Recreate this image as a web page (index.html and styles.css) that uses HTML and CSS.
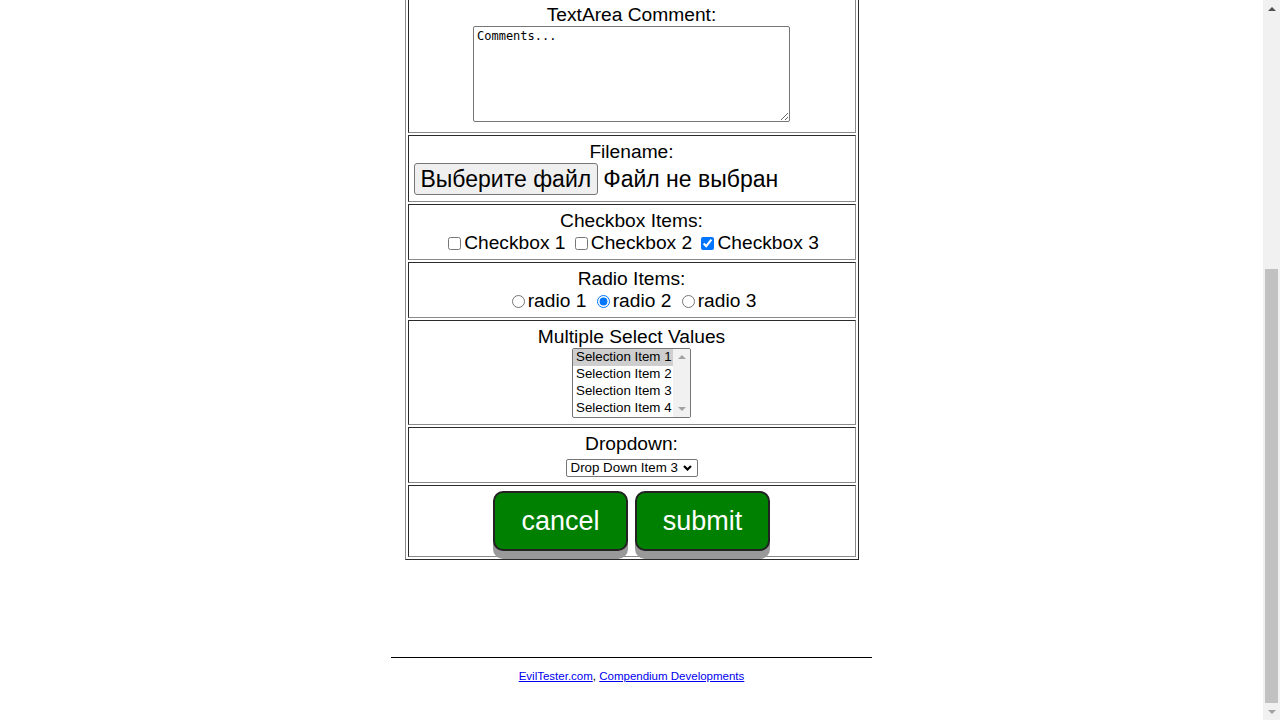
FILE: index.html
```html
<!DOCTYPE html>
<html lang="ru">
<head>
<meta charset="utf-8">
<title>HTML Form Elements</title>
<link rel="stylesheet" href="styles.css">
</head>
<body>
<div class="viewport">
  <div class="page">
    <form class="form" action="#" method="post">
      <table class="form-table">
        <tr><td class="cell-first">
          <div class="label">TextArea Comment:</div>
          <div class="ctl ctl-area"><textarea class="comments" name="comments">Comments...</textarea></div>
        </td></tr>
        <tr><td>
          <div class="label">Filename:</div>
          <div class="ctl ctl-file"><button type="button" class="file-btn">Выберите файл</button><span class="file-name">Файл не выбран</span></div>
        </td></tr>
        <tr><td>
          <div class="label">Checkbox Items:</div>
          <div class="ctl ctl-inline"><input type="checkbox" class="check" name="cb1">Checkbox 1 <input type="checkbox" class="check" name="cb2">Checkbox 2 <input type="checkbox" class="check" name="cb3" checked>Checkbox 3</div>
        </td></tr>
        <tr><td>
          <div class="label">Radio Items:</div>
          <div class="ctl ctl-inline"><input type="radio" class="radio" name="radioval" value="rd1">radio 1 <input type="radio" class="radio" name="radioval" value="rd2" checked>radio 2 <input type="radio" class="radio" name="radioval" value="rd3">radio 3</div>
        </td></tr>
        <tr><td>
          <div class="label">Multiple Select Values</div>
          <div class="ctl ctl-multi">
            <div class="listbox">
              <div class="list-items">
                <div class="list-item is-selected">Selection Item 1</div>
                <div class="list-item">Selection Item 2</div>
                <div class="list-item">Selection Item 3</div>
                <div class="list-item">Selection Item 4</div>
              </div>
              <div class="list-scroll">
                <svg class="arrow" width="8" height="4" viewBox="0 0 8 4"><path d="M0 4 L4 0 L8 4 Z" fill="#a3a3a3"/></svg>
                <svg class="arrow" width="8" height="4" viewBox="0 0 8 4"><path d="M0 0 L4 4 L8 0 Z" fill="#a3a3a3"/></svg>
              </div>
            </div>
          </div>
        </td></tr>
        <tr><td>
          <div class="label">Dropdown:</div>
          <div class="ctl ctl-drop">
            <div class="dropdown"><span class="drop-text">Drop Down Item 3</span><svg class="chev" width="9" height="6" viewBox="0 0 9 6"><path d="M1 1 L4.5 4.5 L8 1" fill="none" stroke="#000" stroke-width="2.2"/></svg></div>
          </div>
        </td></tr>
        <tr><td>
          <div class="ctl ctl-buttons">
            <button type="button" class="styled-click-button">cancel</button>
            <button type="button" class="styled-click-button">submit</button>
          </div>
        </td></tr>
      </table>
    </form>
    <div class="page-footer">
      <hr class="rule">
      <p class="credits"><a href="#">EvilTester.com</a>, <a href="#">Compendium Developments</a></p>
    </div>
  </div>
</div>
<div class="scrollbar" aria-hidden="true">
  <div class="sb-button">
    <svg width="8" height="4" viewBox="0 0 8 4"><path d="M0 4 L4 0 L8 4 Z" fill="#505050"/></svg>
  </div>
  <div class="sb-track"><div class="sb-thumb"></div></div>
  <div class="sb-button">
    <svg width="8" height="4" viewBox="0 0 8 4"><path d="M0 0 L4 4 L8 0 Z" fill="#a3a3a3"/></svg>
  </div>
</div>
</body>
</html>
```

FILE: styles.css
```css
html, body {
  height: 100%;
}
body {
  margin: 0;
  display: flex;
  overflow: hidden;
  background: #fff;
  color: #000;
  font-family: "Liberation Sans", Arial, sans-serif;
}
.viewport {
  flex: 1;
  min-width: 0;
  overflow: hidden;
}
.page {
  padding: 0 8px;
}
.form {
  margin: 0;
}
.form-table {
  width: 454px;
  margin: -2px auto 0;
  border-style: solid;
  border-width: 0 1px 1px 1px;
  border-color: #8a8a8a #2b2b2b #2b2b2b #8a8a8a;
  border-spacing: 2px;
  font-size: 19.2px;
}
.form-table td {
  border-style: solid;
  border-width: 1px;
  border-color: #2b2b2b #8a8a8a #8a8a8a #2b2b2b;
  padding: 5px;
  text-align: center;
  line-height: 22px;
}
.form-table td.cell-first {
  border-top-width: 0;
  padding-top: 4px;
}
.label {
  height: 22px;
}
.ctl {
  min-height: 22px;
}
.ctl-area {
  padding-bottom: 5px;
}
.comments {
  display: block;
  margin: 0 auto;
  box-sizing: border-box;
  width: 317px;
  height: 96px;
  border: 1px solid #767676;
  border-radius: 2px;
  padding: 2px 3px;
  font-family: "DejaVu Sans Mono", "Liberation Mono", monospace;
  font-size: 12px;
  line-height: 14px;
  color: #000;
  resize: both;
  overflow: hidden;
}
.ctl-file {
  display: flex;
  align-items: flex-start;
  height: 33px;
  font-size: 23px;
}
.file-btn {
  box-sizing: border-box;
  height: 32px;
  font-family: inherit;
  font-size: 23px;
  color: #000;
  background: #efefef;
  border: 1px solid #767676;
  border-radius: 3px;
  padding: 0 6px;
  margin: 0 5px 0 0;
  line-height: 28px;
}
.file-name {
  line-height: 32px;
}
.check {
  width: 13px;
  height: 13px;
  margin: 3px 3px 3px 4px;
  vertical-align: -1px;
  accent-color: #0075ff;
}
.radio {
  width: 13px;
  height: 13px;
  margin: 3px 3px 0 5px;
  vertical-align: -1px;
  accent-color: #0075ff;
}
.ctl-multi {
  display: flex;
  justify-content: center;
  padding-bottom: 1px;
}
.listbox {
  display: flex;
  width: 119px;
  height: 70px;
  box-sizing: border-box;
  border: 1px solid #767676;
  border-radius: 2px;
  overflow: hidden;
  background: #fff;
  text-align: left;
}
.list-items {
  flex: 1;
}
.list-item {
  height: 17px;
  line-height: 16px;
  font-size: 13.33px;
  padding-left: 3px;
  white-space: nowrap;
}
.list-item.is-selected {
  background: #cecece;
}
.list-scroll {
  width: 17px;
  background: #f1f1f1;
  display: flex;
  flex-direction: column;
  justify-content: space-between;
  align-items: center;
  padding: 6px 0;
}
.arrow {
  display: block;
}
.ctl-drop {
  display: flex;
  justify-content: center;
  align-items: flex-end;
  height: 22px;
}
.dropdown {
  box-sizing: border-box;
  width: 132px;
  height: 18px;
  border: 1px solid #767676;
  border-radius: 2px;
  display: flex;
  align-items: center;
  justify-content: space-between;
  padding: 0 5px 0 4px;
  font-size: 13.33px;
  line-height: 16px;
  text-align: left;
}
.chev {
  display: block;
}
.ctl-buttons {
  display: flex;
  justify-content: center;
  gap: 7px;
  height: 60px;
}
.styled-click-button {
  box-sizing: border-box;
  width: 135px;
  height: 60px;
  background: #008000;
  color: #fff;
  font-family: inherit;
  font-size: 27px;
  border: 2px solid #222;
  border-radius: 10px;
  box-shadow: 0 8px 0 #999;
  padding: 0;
  position: relative;
  z-index: 1;
}
.page-footer {
  width: 481px;
  margin: 97px auto 0;
  text-align: center;
}
.rule {
  border: 0;
  border-top: 1px solid #000;
  margin: 0;
}
.credits {
  font-size: 11.5px;
  line-height: 13px;
  margin: 12px 0 0;
}
.credits a {
  color: #0000ee;
}
.scrollbar {
  width: 17px;
  flex: none;
  display: flex;
  flex-direction: column;
  background: #f1f1f1;
}
.sb-button {
  height: 17px;
  flex: none;
  display: flex;
  align-items: center;
  justify-content: center;
}
.sb-button svg {
  display: block;
}
.sb-track {
  flex: 1;
  display: flex;
  flex-direction: column;
  justify-content: flex-end;
  align-items: center;
}
.sb-thumb {
  width: 13px;
  height: 434px;
  background: #c1c1c1;
}
```
